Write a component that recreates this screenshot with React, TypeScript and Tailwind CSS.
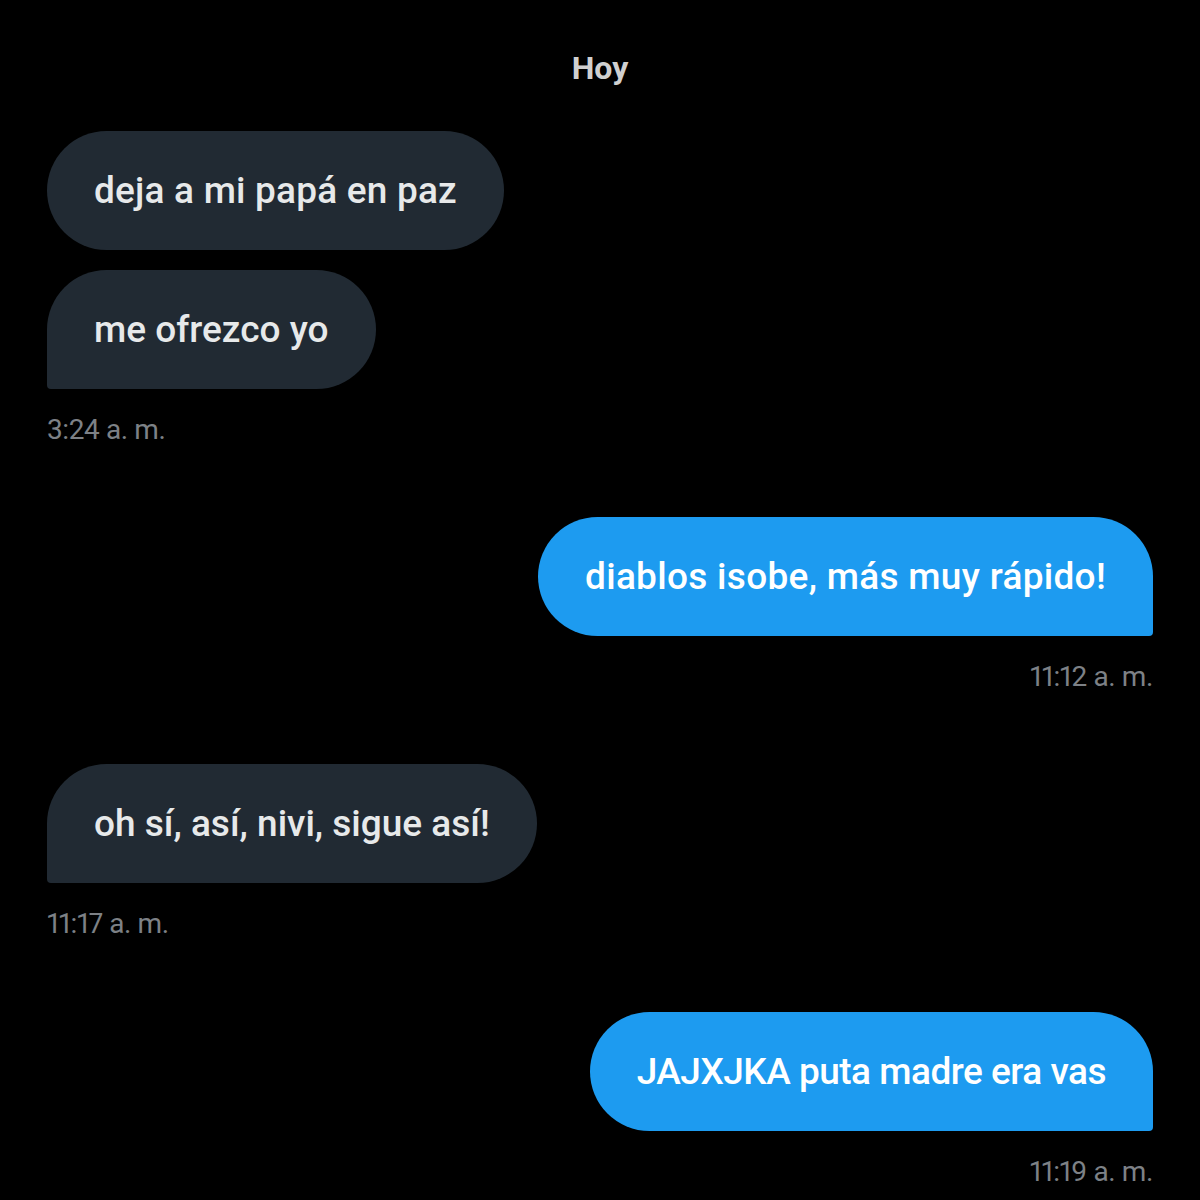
type Msg = {
  text: string;
  mine: boolean;
  last: boolean;
  time?: string;
  mt: string;
  track?: string;
};

const messages: Msg[] = [
  { text: "deja a mi papá en paz", mine: false, last: false, mt: "mt-[45px]" },
  { text: "me ofrezco yo", mine: false, last: true, time: "3:24 a. m.", mt: "mt-[20px]", track: "tracking-[0px]" },
  { text: "diablos isobe, más muy rápido!", mine: true, last: true, time: "11:12 a. m.", mt: "mt-[70px]", track: "tracking-[0.3px]" },
  { text: "oh sí, así, nivi, sigue así!", mine: false, last: true, time: "11:17 a. m.", mt: "mt-[70px]", track: "tracking-[0px]" },
  { text: "JAJXJKA puta madre era vas", mine: true, last: true, time: "11:19 a. m.", mt: "mt-[71px]", track: "tracking-[-0.5px]" },
];

function Bubble({ m }: { m: Msg }) {
  const corner = m.last ? (m.mine ? "rounded-br-[4px]" : "rounded-bl-[4px]") : "";
  const color = m.mine ? "bg-[#1d9bf0] text-white" : "bg-[#212a33] text-[#e7e9ea]";
  return (
    <div className={`flex flex-col ${m.mine ? "items-end" : "items-start"} ${m.mt}`}>
      <div
        className={`flex h-[119px] items-center rounded-[60px] px-[47px] text-[37px] font-medium ${
          m.track ?? "tracking-[0.2px]"
        } ${color} ${corner}`}
      >
        {m.text}
      </div>
      {m.time && (
        <div className="mt-[24px] h-[34px] text-[28px] leading-[34px] text-[#7d8186] proportional-nums tracking-[-0.4px]">
          {m.time}
        </div>
      )}
    </div>
  );
}

export default function App() {
  return (
    <div
      className="min-h-[1200px] w-[1200px] bg-black px-[47px] pt-[50px]"
      style={{ fontFamily: "Roboto, 'Liberation Sans', sans-serif" }}
    >
      <div className="h-[36px] text-center text-[32px] font-bold leading-[36px] text-[#d0d0d0]">Hoy</div>
      {messages.map((m, i) => (
        <Bubble key={i} m={m} />
      ))}
    </div>
  );
}
